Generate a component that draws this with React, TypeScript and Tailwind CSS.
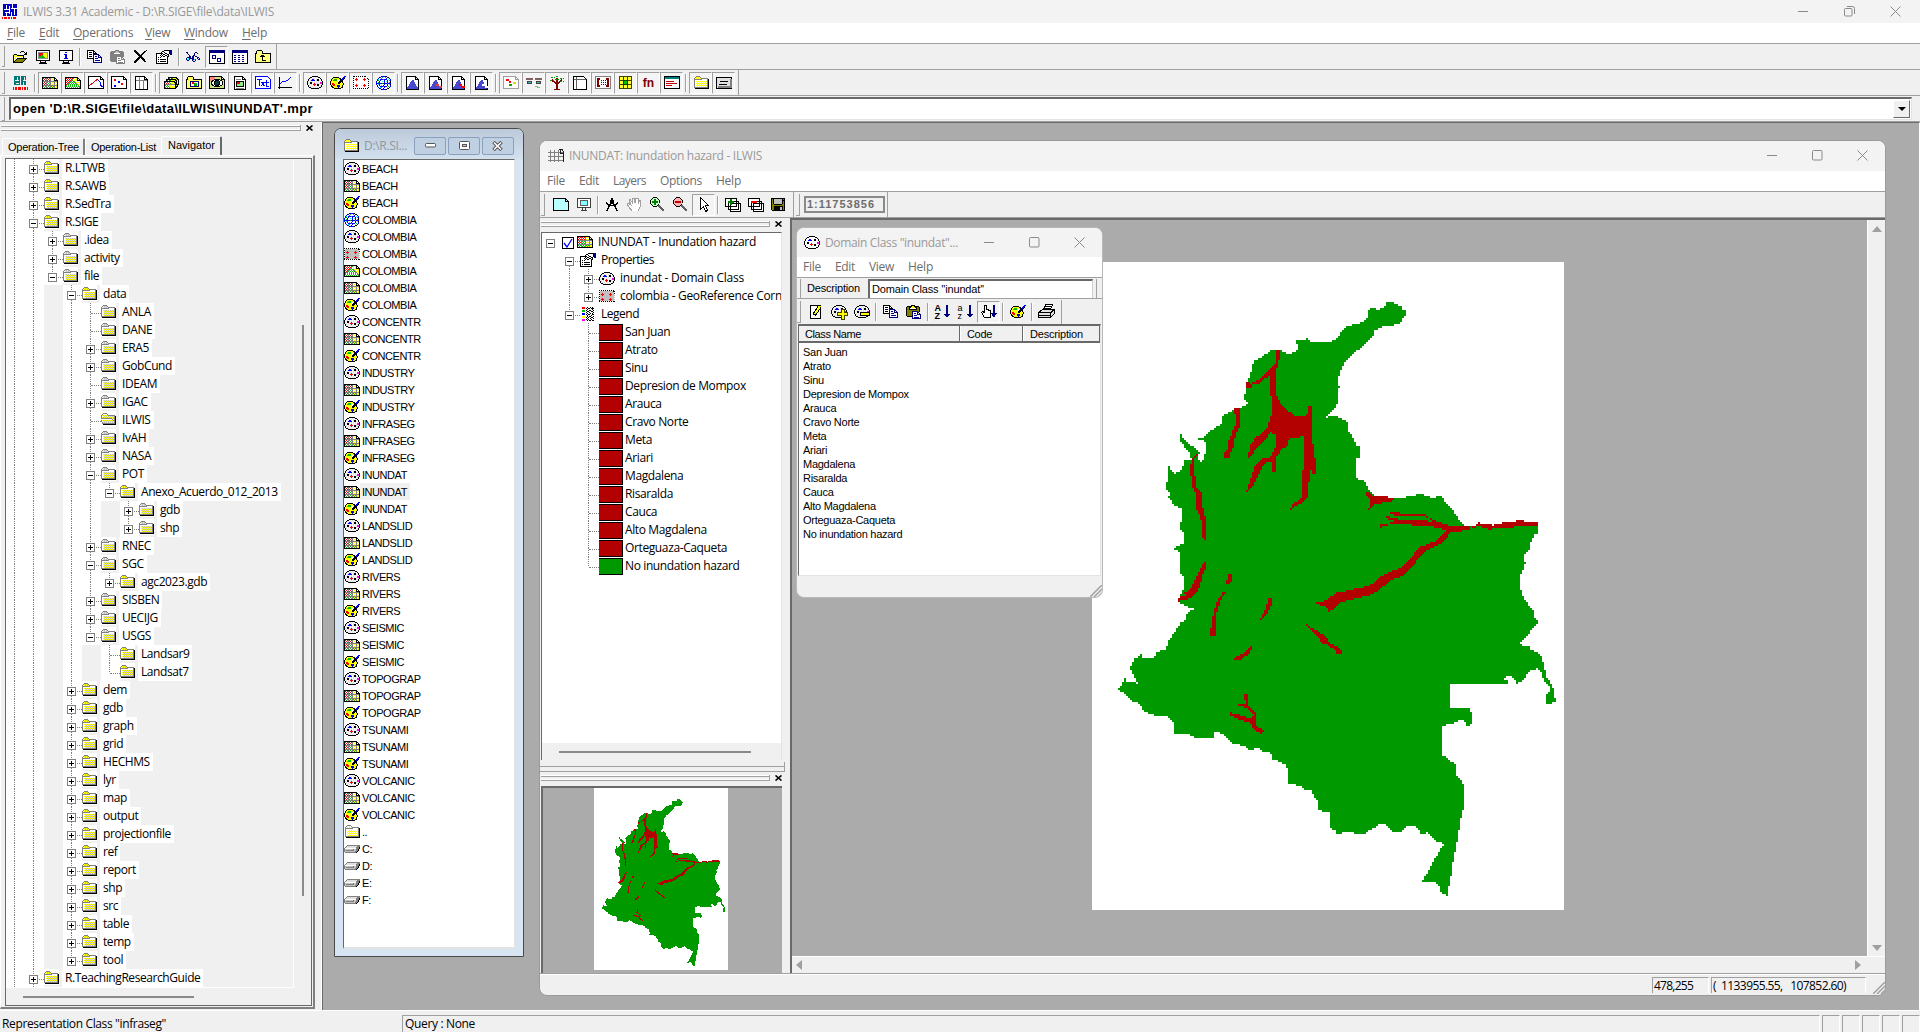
import { useLayoutEffect, useMemo, useRef, useState, type ReactNode } from "react";

const SEGOE = "font-['Open_Sans','Noto_Sans',sans-serif]";
const MSS = "font-['Liberation_Sans',sans-serif]";

/* Text that spreads or tightens its letters to fill a given width. */
function Fit({ w, children, className = "" }: { w: number; children: string; className?: string }) {
  const ref = useRef<HTMLSpanElement>(null);
  const [ls, setLs] = useState(0);
  useLayoutEffect(() => {
    if (ref.current) setLs((w - ref.current.getBoundingClientRect().width) / children.length);
  }, [w, children]);
  return (
    <span ref={ref} className={"inline-block whitespace-pre " + className} style={{ letterSpacing: ls }}>
      {children}
    </span>
  );
}

const PAL: Record<string, string> = {
  k: "#000000", w: "#ffffff", r: "#ff0000", g: "#00c000", G: "#808080", y: "#ffff00", b: "#0000ff",
  m: "#ff00ff", s: "#c0c0c0", n: "#000080", c: "#00ffff", t: "#008080", d: "#800000", o: "#808000", l: "#e0e0e0",
};

function Px({ rows, w = 16 }: { rows: string[]; w?: number }) {
  const out: ReactNode[] = [];
  rows.forEach((row, y) => {
    let x = 0;
    while (x < row.length) {
      const ch = row[x];
      let e = x + 1;
      while (e < row.length && row[e] === ch) e++;
      if (PAL[ch]) out.push(<rect key={x + "-" + y} x={x} y={y} width={e - x} height={1} fill={PAL[ch]} />);
      x = e;
    }
  });
  return (
    <svg className="block shrink-0" width={w} height={rows.length} viewBox={`0 0 ${w} ${rows.length}`} shapeRendering="crispEdges">
      {out}
    </svg>
  );
}

const RASTER = [
  "kkkkkkkkkkkkk",
  "krwrGrwrGywykk",
  "kwrwGwrwGwywkwk",
  "krwrGrwrGywykkkk",
  "kGGGGGGGGGGGGGGk",
  "kwrwGgwgGwywGwyk",
  "krwrGwgwGywyGywk",
  "kwrwGgwgGwywGwyk",
  "kGGGGGGGGGGGGGGk",
  "kgwgGwgwGgygGyyk",
  "kwgwGgwgGygyGyyk",
  "kkkkkkkkkkkkkkkk",
];
const DOMAIN = [
  "     kkkkkk",
  "   kkwlwlwlkk",
  "  klwlwlwlwlwk",
  " klwlbblwlkkwlk",
  " kwlbbbbwlkklwk",
  "klwlwlwlwlwlwlwk",
  "kwlkklwlwlwlwmmk",
  "klwkkwlrlwlwlmmk",
  "kwlwlwrrrwkklwlk",
  " klwlwlrlwkkwlk",
  " kwlwlwlwlwlwlk",
  "  kklwlwlwlwkk",
  "    kkkkkkkk",
];
const REPR = [
  "              bb",
  "   kkkkkk    bb",
  "  kyyyyyykk bbk",
  " kyygggyyykkbk",
  " kyggggywykkk",
  "kyyyyyyywkkkk",
  "kyyyyyywkkkyk",
  "kyrryyyykkyyyk",
  "kyrrryyyyyyyyk",
  " kyrryybbbyyk",
  " kkyyyybbbyyk",
  "  kkyyyybyykk",
  "    kkkkkkk",
];
const GLOBE = [
  "     kbbbbk",
  "   kbwgwwgwbk",
  "  bwwgwwwwbwwb",
  " bcwbbbgbbbwcwb",
  " bgwbwwwbwwbwgb",
  "bwwbwwcwbwcbwwk",
  "bwgbwwwwbwwbwgk",
  "bbbbbbgbbbbgbbb",
  "bwcbwwwwbwwbwck",
  " bwbwcwbwwwbwwb",
  " bwwbbbgbbbwgwb",
  "  bwcgwwbwwcwb",
  "   kbwwbwwwbk",
  "     kbbbbk",
];
const GEOREF = [
  "k k k k k k k k",
  " ssssssssssssskk",
  "kssssssssssssss",
  " ssrsssssssrssskk",
  "ksrrrsssssrrrss",
  " ssrsssssssrssssk",
  "kssssssssssssss",
  " sssssssssssssssk",
  "kssrsssssssrsss",
  " srrrsssssrrrsssk",
  "kssrsssssssrsss",
  "k k k k k k k kk",
];
const FOLDER = [
  "   GGGG",
  "  GywywG",
  " GwywywyGGGGGGG",
  " GGGGGGGGwwwwwGk",
  " GwwwwwwwwwwwwGk",
  " GwywywywywywyGk",
  " GwwywywywywywGk",
  " GwywywywywywyGk",
  " GwwywywywywywGk",
  " GwywywywywywyGk",
  " GwwywywywywywGk",
  " GGGGGGGGGGGGGGk",
  "  kkkkkkkkkkkkkk",
];
const FOLDER_OPEN = [
  "   GGGG",
  "  GwwwwG",
  " GywywywGGGGGGG",
  " GwywywywywywyGk",
  " GywywywywywywGk",
  "GGGGGGGGGGGGywGk",
  "GwwwwwwwwwwwGyGk",
  " GywywywywywyGGkk",
  " GwywywywywywyGkk",
  "  GywywywywywyGkk",
  "  GGGGGGGGGGGGGkk",
  "   kkkkkkkkkkkkk",
];
const deep = (rows: string[]) => rows.map((r) => r.replace(/yw/g, "ys"));
const TREE_FOLDER = deep(FOLDER);
const TREE_OPEN = deep(FOLDER_OPEN);
const MAPPOLY = [
  "kkkkkkkkkkkkk",
  "krwrwrwrgwwykk",
  "kwrwrwrGwywykwk",
  "krwrwrGgwywykkkk",
  "kwrwrGgwgGywywyk",
  "krwrGgwgwgGywyyk",
  "kwrGgwgwgwgGywyk",
  "krGgwgwgwgwgGyyk",
  "kGwgwgwgwgwgwGyk",
  "kgwgwgwgwgwgwgGk",
  "kwgwgwgwgwgwgwgk",
  "kkkkkkkkkkkkkkkk",
];
const DRIVE = [
  "   GGGGGGGGGGGGG",
  "  GllllllllllGGG",
  " GllllllllllGGGk",
  "GwwwwwwwwwwwGGGk",
  "GssssssssgssGGk",
  "GsGGGGGGGGssGGk",
  "GssssssssssGGk",
  " GGGGGGGGGGGk",
];
const COPY = [
  "kkkkkkk",
  "kwwwwwkk",
  "kwkkkwkwk",
  "kwwwwwkkkk",
  "kwkkkwnnnnnn",
  "kwwwwwnwwwwnn",
  "kwkkkwnwnnwnwn",
  "kwwwwwnwwwwnnnn",
  "kkkkkknwnnnwwwn",
  "      nwwwwwwwn",
  "      nwnnnnnwn",
  "      nwwwwwwwn",
  "      nnnnnnnnn",
];
const PASTE = [
  "     kkkk",
  " kkkkkyykkkkk",
  "kookkyyyykkook",
  "kookwwwwwwkook",
  "kookkkkkkkkook",
  "kooooooooooook",
  "kooooonnnnnnok",
  "kooooonwwwwnn",
  "kooooonwnnwnwn",
  "kooooonwwwwnnnn",
  "kooooonwnnnwwwn",
  " kkkkknwwwwwwwn",
  "      nwnnnnnwn",
  "      nnnnnnnnn",
];
const PASTE_GRAY = PASTE.map((r) => r.replace(/[konywG]/g, (c) => (c === "w" ? "w" : c === "y" ? "s" : "G")));
const PROPS = [
  "        kkkkkknn",
  "      kkwwwwwknn",
  "     kwwkwwwwknn",
  "kkkkkkkwwkkwwknn",
  "kwwwwkwkkwwkk nn",
  "kwwwkwkwwkkwk",
  "kwwwwkwkkwwkk",
  "kwkwkwwwwwwk",
  "kwwwwwwwwwwk",
  "kwkwkkkkkkwk",
  "kwwwwwwwwwwk",
  "kwkwkkkkkkwk",
  "kwwwwwwwwwwk",
  "kkkkkkkkkkkk",
];
const LEGEND = [
  "rrr  k  k k",
  "rrr k kk kkk",
  "     k    k",
  "ggg k  kk  k",
  "ggg  kk  kk",
  "    k  k   k",
  "bbb  k  k k",
  "bbb k kk  kk",
  "     k   k",
  "yyy  k kk  k",
  "yyy k k  kk",
  "     k  k  k",
  "mmm k k  k",
  "mmm  k kk kk",
];
const OPEN = [
  "         kkk",
  "        k   k k",
  "             kk",
  "  kkk       kkk",
  " kyyykkkkkkk",
  " kywywywywyk",
  " kwywywywywk",
  " kyywkkkkkkkkkk",
  " kwykooooooook",
  " kykooooooook",
  " kkooooooook",
  " kkkkkkkkkk",
];
const CROSS = [
  "kk          k",
  "kkk       kk",
  " kkk     kk",
  "  kkk   kk",
  "   kkk kk",
  "    kkkk",
  "     kkk",
  "    kkkkk",
  "   kkk kkk",
  "  kkk   kkk",
  " kkk     kk",
  "kkk       kk",
  "kk",
];
const GLASSES = [
  "nn       nn",
  " n      n  n",
  "  n     n",
  "   n   nn",
  "   nn nn nn",
  " nnnn nn   nn",
  "nwcnnnnn   n n",
  "nccn  nncn  nn",
  " nn   ncwn",
  "       nn",
];
const SAVE = [
  "kkkkkkkkkkkkkk",
  "koksssssssskok",
  "koksssssssskkk",
  "koksssssssskok",
  "koksssssssskok",
  "koksssssssskok",
  "kookkkkkkkkook",
  "kooooooooooook",
  "kookkkkkkkkkok",
  "kookkkkkksskok",
  "kookkkkkksskok",
  "kookkkkkksskok",
  " kkkkkkkkkkkkk",
];
const STACK = [
  "     kkkkkkkkk",
  "     krwrgyyykk",
  "   kkkkkkkkkkykk",
  "   krwrgwyyykkyk",
  " kkkkkkkkkkkykyk",
  " krwrwgwyyykkkyk",
  " kwrwrwgwywykkyk",
  " kGGGGGGGGGGkkkk",
  " kgwgwyyywywkyk",
  " kwgwgwywywykkk",
  " kgwgwgyyyyykk",
  " kkkkkkkkkkkk",
];

function Svg({ children, w = 16, h = 14 }: { children: ReactNode; w?: number; h?: number }) {
  return (
    <svg className="block shrink-0" width={w} height={h} viewBox={`0 0 ${w} ${h}`} shapeRendering="crispEdges" fill="none" stroke="#000">
      {children}
    </svg>
  );
}
const PAGE = "M.5 .5h12l3 3v9h-15z M12.5 .5v3h3";
const TALL = "M2.5 .5h8l3 3v10h-11z M10.5 .5v3h3";

const Ico = {
  monitor: (
    <Svg><path d="M1.500 .5h13v10h-13z" fill="#fff" /><path d="M5.500 10.500v2h5v-2 M4 13.500h8" /><path stroke="#909090" d="M3.500 2.500h9v6h-9z" /><path stroke="none" fill="#f00" d="M4 3h4v3h-4z" /><path stroke="none" fill="#ff0" d="M8 3h4v5h-4z" /><path stroke="none" fill="#00c000" d="M4 6l4-1 2 3h-6z" /></Svg>
  ),
  info: (
    <Svg><path d="M1.500 .5h13v10h-13z" fill="#fff" /><path d="M5.500 10.500v2h5v-2 M4 13.500h8" /><path stroke="none" fill="#0000e0" d="M7 2h2v1h-2z M6 4h3v4h1v1h-4v-1h1v-3h-1z" /></Svg>
  ),
  icons: (
    <Svg><path d="M.5 .5h15v13h-15z" fill="#fff" /><path stroke="none" fill="#000080" d="M0 0h16v3h-16z" /><path stroke="#000080" d="M3.500 5.500h3v3h-3z M8.500 8.500h3v3h-3z" /></Svg>
  ),
  details: (
    <Svg><path d="M.5 .5h15v13h-15z" fill="#fff" /><path stroke="none" fill="#000080" d="M0 0h16v3h-16z" /><path stroke="#000080" strokeDasharray="2 2" d="M2 5.500h12 M2 7.500h12 M2 9.500h12 M2 11.500h12" /></Svg>
  ),
  up: (
    <Svg><path d="M.5 12.500v-9h1v-2l1-1h4l1 1v2h8v9z" fill="#ffff80" /><path d="M7 10.500h4 M7.500 10.500v-5 M5 6.500h5 M6 5.500h3" /></Svg>
  ),
  seg: (<Svg h={13}><path d={PAGE} fill="#fff" /><path stroke="#f00" d="M1 10l5-4 4-3" /><path stroke="#00f" d="M9 3l3 3v3l3 2" /></Svg>),
  pts: (<Svg h={13}><path d={PAGE} fill="#fff" /><path stroke="none" fill="#f00" d="M3 3h2v2h-2z M10 7h2v2h-2z" /><path stroke="none" fill="#00f" d="M7 5h2v2h-2z M3 9h2v2h-2z" /></Svg>),
  table: (<Svg w={14}><path d="M.5 .5h9l3 3v10h-12z M9.500 .5v3h3" fill="#fff" /><path stroke="#808080" d="M1 4.500h11 M4.500 1v12 M8.500 4v9" /></Svg>),
  obj: (
    <Svg><path d="M.5 12.500v-9h1v-2l1-1h4l1 1v2h8v9z" fill="#ffff60" /><path d="M4.500 5.500h8v5h-8z" fill="#fff" stroke="#000080" strokeWidth="1.500" /><path stroke="none" fill="#f00" d="M6 6h2v2h-2z" /><path stroke="none" fill="#0a0" d="M8 7h3v3h-3z" /></Svg>
  ),
  view: (<Svg h={13}><path d={PAGE} fill="#cfe880" /><path stroke="none" fill="#f88" d="M1 1h5v4h-5z" /><ellipse cx="8" cy="7" rx="5.500" ry="3.500" fill="#fff" /><circle cx="8" cy="7" r="2.500" fill="#004040" /></Svg>),
  layout: (<Svg><path d={TALL} fill="#fff" /><path stroke="#808080" d="M4 3.500h5 M4 12h8" /><path d="M4.500 5.500h7v5h-7z" fill="#8e8" /><path stroke="none" fill="#f00" d="M5 6h3v2h-3z" /></Svg>),
  txt: (<Svg h={13}><path d="M.5 .5h12l3 3v9h-15z" fill="#fff" stroke="#00f" /><path stroke="#00f" d="M2 3.500h5 M4.500 3v7 M6.500 6l3 4 M9.500 6l-3 4 M11.500 4v6h2 M10 6.500h4" /></Svg>),
  graph: (<Svg><path d="M1.500 1v12 M0 11.500h14" /><path stroke="#00f" d="M2 8l3-3h3l2-1 3-3" /></Svg>),
  grf: (<Svg h={13}><path d="M.5 .5h12l3 3v9h-15z" fill="#fff" strokeDasharray="1 1" /><path stroke="#f00" d="M2 3.500h3 M3.500 2v3 M10 3.500h3 M11.500 2v3 M2 9.500h3 M3.500 8v3 M10 9.500h3 M11.500 8v3" /></Svg>),
  hand: (
    <svg className="block shrink-0" width="16" height="15" viewBox="0 0 16 15" fill="#fff" stroke="#a0a0a0" shapeRendering="crispEdges"><path d="M5 14l-3-4-2-3 1-1 3 2-2-5 1-1 3 5-1-6h2l1 5 1-5h2v6l2-4h1l-1 7-2 4" /></svg>
  ),
  compass: (<Svg w={14}><path d="M7 0v4 M5.500 2v3h3v-3 M5.500 5.500l-4 8 M8.500 5.500l4 8 M1 4.500l3 3h6l3-3" strokeWidth="1.300" /></Svg>),
  zin: (<Svg h={15}><path d="M8 8l6 6" strokeWidth="2.500" stroke="#606060" /><circle cx="5" cy="5" r="4.300" fill="#c8ffc8" /><path stroke="#008000" strokeWidth="2" d="M5 2v6 M2 5h6" /></Svg>),
  zout: (<Svg h={15}><path d="M8 8l6 6" strokeWidth="2.500" stroke="#606060" /><circle cx="5" cy="5" r="4.300" fill="#ffb0b0" /><path stroke="#c00000" strokeWidth="2" d="M2 5h6" /></Svg>),
  arrow: (<Svg w={10} h={16}><path d="M1.500 .5v12l3-3 2 5 2-1-2-5h3z" fill="#fff" /></Svg>),
  addl: (<Svg h={15}><path d="M5.500 6.500h10v8h-10z M3.500 4.500h10v8h-10z M.5 1.500h11v8h-11z" fill="#fff" /><path stroke="#008000" strokeWidth="2" d="M6 2v6 M3 5h6" /></Svg>),
  dell: (<Svg h={15}><path d="M5.500 6.500h10v8h-10z M3.500 4.500h10v8h-10z M.5 1.500h11v8h-11z" fill="#fff" /><path stroke="#f00" strokeWidth="2" d="M3 5h6" /></Svg>),
  sheet: (<Svg h={13}><path d={PAGE} fill="#b8ffff" /></Svg>),
  cymon: (<Svg h={15}><path d="M1.500 1.500h13v9h-13z M5 13.500h6 M6.500 11v2 M9.500 11v2" fill="#fff" stroke="#404040" /><path d="M4.500 3.500h7v5h-7z" fill="#80ffff" stroke="#606060" /></Svg>),
  grid: (<Svg h={13}><path d="M0 3.500h16 M0 7.500h16 M0 11.500h15 M2.500 1v12 M6.500 1v12 M10.500 1v12" stroke="#808080" /><path d="M11 .5h3l1.500 2v10 M12.500 1v3h3" stroke="#202020" /></Svg>),
  edit: (<Svg h={15}><path d="M2.500 1.500h10v13h-10z" fill="#fff" /><path d="M12 2l-6 9" stroke="#000" strokeWidth="4" /><path d="M12 2l-5 8" stroke="#ff0" strokeWidth="2" /></Svg>),
  tree: (<Svg h={15}><path stroke="#800000" strokeWidth="2" d="M8 14v-7 M3 5l5 4 5-4 M8 8v-5" /><path stroke="#800000" d="M5 14.500h6" /><path stroke="#00a000" strokeDasharray="2 1" d="M2 2.500h4 M7 1.500h3 M11 3.500h4 M1 5.500h4 M11 6.500h4 M6 4.500h4" /></Svg>),
  eyes: (<Svg h={12}><path stroke="#806060" strokeWidth="2" d="M0 1.500h7 M9 1.500h7" /><path fill="#40c0c0" stroke="#404040" d="M1.500 4.500h4v2h-4z M10.500 4.500h4v2h-4z" /><path stroke="#80c080" d="M9 9l5 2" /></Svg>),
  mat: (<Svg h={13}><path d="M.5 .5h15v12h-15z" fill="#fff" stroke="#808080" /><path stroke="#800000" strokeWidth="1.500" d="M5 3h-2v7h2 M11 3h2v7h-2" /><path stroke="#800000" strokeDasharray="1 1" d="M6 4.500h5 M6 6.500h5 M6 8.500h5" /></Svg>),
  filt: (<Svg><path d="M1.500 .5h12v12h-12z" fill="#ffff30" stroke="#404000" /><path d="M5.500 1v12 M9.500 1v12 M2 4.500h12 M2 8.500h12" stroke="#404000" /><path d="M5.500 4.500h4v4h-4z" fill="#00c000" stroke="#004000" /></Svg>),
  script: (<Svg h={13}><path d="M.5 .5h15v12h-15z" fill="#fff" /><path stroke="none" fill="#008080" d="M1 1h14v2h-14z" /><path stroke="#c00000" d="M2 5.500h8 M2 7.500h11 M2 9.500h6" /></Svg>),
  form: (<Svg h={12}><path d="M.5 .5h15v11h-15z" fill="#e0e0e0" /><path strokeWidth="2" d="M2 10h13v-8" stroke="#808080" /><path d="M4 4.500h8 M3 7.500h8" /></Svg>),
  tblnew: (<Svg><path d="M1.500 .5h10l3 3v10h-13z" fill="#fff" /><path stroke="#606060" d="M2 3.500h12 M4.500 1v12" /></Svg>),
  sample: (<Svg h={13}><path d={PAGE} fill="#fff" stroke="#a0a0a0" /><path stroke="#f00" strokeWidth="2" d="M3 4h3 M6 6h2" /><path stroke="#0a0" strokeWidth="2" d="M6 9h3" /><path stroke="#dd0" strokeWidth="2" d="M10 7h3" /></Svg>),
  az: (
    <span className={"relative flex h-4 w-4 flex-col text-[9px] font-bold leading-[8px] text-black " + MSS}>
      <span>A</span><span>Z</span>
      <svg className="absolute left-[9px] top-[1px]" width="6" height="14" viewBox="0 0 6 14" shapeRendering="crispEdges"><path d="M2 0h2v9h2l-3 4-3-4h2z" fill="#000080" /></svg>
    </span>
  ),
  za: (
    <span className={"relative flex h-4 w-4 flex-col text-[9px] leading-[8px] text-black " + MSS}>
      <span>a</span><span>z</span>
      <svg className="absolute left-[9px] top-[1px]" width="6" height="14" viewBox="0 0 6 14" shapeRendering="crispEdges"><path d="M2 0h2v9h2l-3 4-3-4h2z" fill="#000080" /></svg>
    </span>
  ),
  point: (
    <svg className="block shrink-0" width="16" height="15" viewBox="0 0 16 15" shapeRendering="crispEdges"><path d="M3.500 13.500l-3-5 1-1 2 1v-7h2v4l4 1v7z" fill="#fff" stroke="#000" /><path d="M12 1h2v8h2l-3 5-3-5h2z" fill="#000080" /></svg>
  ),
  print: (<Svg w={17} h={15}><path d="M5.500 5.500l2-5h7l-2 5z" fill="#fff" /><path d="M7 2.500h6 M6 4h6" /><path d="M.5 8.500l4-3h12v4l-4 4h-12z" fill="#e0e0e0" /><path d="M1 8.500h12l3-3 M1 11.500h11 M12.500 9v4" /></Svg>),
};

function Hist({ extra }: { extra?: string }) {
  return (
    <Svg w={14}>
      <path d="M.5 .5h9l3 3v10h-12z M9.500 .5v3h3" fill="#fff" />
      <path stroke="none" fill="#4848d0" d="M1 13v-2l2-2 2-4 1-1h1l1 1 2 4 2 3v1z" />
      {extra && <path stroke="none" fill={extra} d="M7 8h3v2h-3z M10 10h3v2h-3z" />}
    </Svg>
  );
}

function Logo() {
  return (
    <svg className="block shrink-0" width="15" height="16" viewBox="0 0 15 16" shapeRendering="crispEdges">
      <rect x="1" width="14" height="12" fill="#0000c0" />
      <path d="M4 1v4 M2 5.500h5 M7 2v8 M10.500 0v4 M9 4.500h6 M12.500 5v6 M3 8.500h4 M9 8v4 M4.500 9v3" stroke="#fff" fill="none" />
      <path d="M0 14h15" stroke="#f00" strokeWidth="2" strokeDasharray="1 1 3 1 2 1" />
    </svg>
  );
}
function LogoTeal() {
  return (
    <svg className="block shrink-0" width="15" height="16" viewBox="0 0 15 16" shapeRendering="crispEdges">
      <path d="M1 1h12v9h-12z" fill="#007878" />
      <path d="M4.500 2v3 M2 5.500h4 M7.500 1v9 M10 5.500h4 M10.500 7v3 M11 2v3 M3 8h3" stroke="#f0f0f0" fill="none" />
      <path d="M0 13.500h15" stroke="#f00" strokeWidth="3" strokeDasharray="1 1 2 1 3 1" />
    </svg>
  );
}

const Slot = ({ children, boxed, w = "w-[23px]" }: { children?: ReactNode; boxed?: boolean; w?: string }) => (
  <div className={"flex h-[22px] shrink-0 items-center justify-center " + w + (boxed ? " border-l border-t border-l-[#a0a0a0] border-t-[#a0a0a0] border-r border-b border-r-white border-b-white bg-[#f4f4f4]" : "")}>
    {children}
  </div>
);
const Sep = ({ w = "w-[6px]" }: { w?: string }) => (
  <div className={"flex h-[18px] shrink-0 justify-center " + w}>
    <div className="w-px bg-[#a0a0a0]" />
    <div className="w-px bg-white" />
  </div>
);

/* ---------- trees ---------- */
const Dots = ({ className }: { className: string }) => <div className={"absolute border-dotted border-[#808080] " + className} />;

function Cell({ up, down, dash, box, white = true }: { up?: boolean; down?: boolean; dash?: boolean; box?: string; white?: boolean }) {
  return (
    <div className={"relative h-[18px] w-[19px] shrink-0 " + (white ? "bg-white" : "")}>
      {up && <Dots className="left-[8px] top-0 h-[9px] border-l" />}
      {down && <Dots className="left-[8px] top-[9px] h-[9px] border-l" />}
      {dash && <Dots className="left-[9px] top-[10px] w-[10px] border-t" />}
      {box && (
        <div className="absolute left-[4px] top-[6px] h-[9px] w-[9px] border border-[#808080] bg-white">
          <div className="absolute left-px top-[3px] h-px w-[5px] bg-black" />
          {box === "+" && <div className="absolute left-[3px] top-px h-[5px] w-px bg-black" />}
        </div>
      )}
    </div>
  );
}

type Node = [number, string, string, string?];
const TREE: Node[] = [
  [1, "R.LTWB", "+"], [1, "R.SAWB", "+"], [1, "R.SedTra", "+"], [1, "R.SIGE", "-"],
  [2, ".idea", "+"], [2, "activity", "+"], [2, "file", "-"],
  [3, "data", "-"],
  [4, "ANLA", ""], [4, "DANE", ""], [4, "ERA5", "+"], [4, "GobCund", "+"], [4, "IDEAM", ""], [4, "IGAC", "+"],
  [4, "ILWIS", "", "open"], [4, "IvAH", "+"], [4, "NASA", "+"], [4, "POT", "-"],
  [5, "Anexo_Acuerdo_012_2013", "-"], [6, "gdb", "+"], [6, "shp", "+"],
  [4, "RNEC", "+"], [4, "SGC", "-"], [5, "agc2023.gdb", "+"], [4, "SISBEN", "+"], [4, "UECIJG", "+"], [4, "USGS", "-"],
  [5, "Landsar9", ""], [5, "Landsat7", ""],
  [3, "dem", "+"], [3, "gdb", "+"], [3, "graph", "+"], [3, "grid", "+"], [3, "HECHMS", "+"], [3, "lyr", "+"], [3, "map", "+"],
  [3, "output", "+"], [3, "projectionfile", "+"], [3, "ref", "+"], [3, "report", "+"], [3, "shp", "+"], [3, "src", "+"],
  [3, "table", "+"], [3, "temp", "+"], [3, "tool", "+"],
  [1, "R.TeachingResearchGuide", "+"],
];
function continues(i: number, col: number) {
  if (col <= 1) return true;
  for (let k = i + 1; k < TREE.length; k++) {
    if (TREE[k][0] === col) return true;
    if (TREE[k][0] < col) return false;
  }
  return false;
}

function NavTree() {
  return (
    <div className="flex h-[829px] w-[288px] shrink-0 flex-col overflow-hidden border-b border-r border-white">
      {TREE.map(([lvl, label, box, open], i) => (
        <div key={i} className="flex h-[18px] shrink-0">
          {Array.from({ length: lvl }, (_, c) => {
            const on = continues(i, c);
            return <Cell key={c} up={on} down={on} white={on} />;
          })}
          <Cell up down={continues(i, lvl)} dash box={box} />
          <div className="-ml-px flex h-4 w-4 shrink-0 items-start bg-white pt-0.5">
            <Px rows={open ? TREE_OPEN : TREE_FOLDER} />
          </div>
          <div className="w-[3px]" />
          <div className={"h-[18px] bg-white pl-[3px] pr-[3px] text-[12px] leading-[18px] tracking-[-0.42px] text-black " + SEGOE}>{label}</div>
        </div>
      ))}
    </div>
  );
}

const NAMES = ["BEACH", "COLOMBIA", "CONCENTR", "INDUSTRY", "INFRASEG", "INUNDAT", "LANDSLID", "RIVERS", "SEISMIC", "TOPOGRAP", "TSUNAMI", "VOLCANIC"];
const FILES: [string[], string][] = [];
NAMES.forEach((n) => {
  if (n === "COLOMBIA") [GLOBE, DOMAIN, GEOREF, MAPPOLY, RASTER, REPR].forEach((ic) => FILES.push([ic, n]));
  else [DOMAIN, RASTER, REPR].forEach((ic) => FILES.push([ic, n]));
});
FILES.push([FOLDER, ".."]);
["C:", "D:", "E:", "F:"].forEach((d) => FILES.push([DRIVE, d]));

const CLASSES = ["San Juan", "Atrato", "Sinu", "Depresion de Mompox", "Arauca", "Cravo Norte", "Meta", "Ariari", "Magdalena", "Risaralda", "Cauca", "Alto Magdalena", "Orteguaza-Caqueta", "No inundation hazard"];

/* ---------- map of Colombia ---------- */
const LAND =
  "885,127 912,127 914,133 932,138 937,148 946,152 950,160 943,172 935,180 928,193 890,198 868,202 855,212 848,228 828,246 806,268 790,283 768,303 757,318 749,340 743,358 748,382 742,402 742,428 735,442 718,458 708,472 740,466 752,475 768,480 774,490 774,512 788,530 798,555 812,558 812,588 800,596 800,650 806,660 824,664 832,680 840,696 852,708 885,710 912,716 945,711 972,710 978,701 998,701 1000,708 1025,712 1052,710 1064,722 1084,745 1105,775 1121,796 1150,798 1165,790 1210,800 1250,790 1290,783 1344,790 1346,818 1332,826 1322,850 1320,870 1300,886 1307,910 1296,935 1290,950 1290,970 1296,1005 1308,1022 1320,1040 1330,1050 1333,1075 1346,1088 1330,1105 1290,1150 1296,1157 1320,1160 1322,1172 1340,1174 1358,1195 1360,1220 1366,1235 1370,1252 1378,1258 1383,1275 1390,1285 1390,1308 1397,1315 1397,1328 1370,1330 1370,1300 1378,1296 1380,1278 1366,1270 1358,1255 1352,1235 1346,1226 1325,1228 1312,1240 1300,1260 1284,1268 1275,1270 1275,1258 1262,1244 1252,1246 1244,1258 1254,1264 1254,1275 1130,1275 1125,1272 1092,1273 1077,1276 1077,1342 1134,1342 1146,1360 1148,1378 1140,1396 1130,1395 1120,1382 1106,1382 1086,1392 1053,1398 1053,1480 1070,1495 1082,1503 1097,1512 1099,1545 1112,1560 1121,1577 1121,1645 1114,1670 1106,1715 1098,1760 1090,1800 1084,1840 1078,1870 1074,1900 1067,1906 1050,1895 1046,1875 1035,1865 994,1868 1012,1840 1030,1805 1050,1770 1062,1750 1040,1745 1022,1728 1010,1718 994,1722 984,1704 970,1695 950,1698 934,1715 905,1715 895,1702 885,1695 868,1692 858,1704 832,1712 822,1722 804,1725 780,1715 740,1722 735,1710 718,1704 720,1658 705,1654 684,1652 684,1625 670,1608 664,1590 640,1588 636,1578 594,1570 596,1545 588,1514 570,1505 548,1497 542,1480 520,1474 505,1464 480,1469 460,1458 424,1448 405,1428 386,1418 373,1417 368,1436 320,1436 300,1425 252,1424 252,1390 234,1370 200,1368 158,1352 150,1332 125,1322 110,1305 82,1287 98,1275 100,1257 112,1265 143,1270 132,1245 120,1225 135,1195 152,1184 158,1196 190,1196 200,1175 225,1168 238,1140 255,1115 270,1090 290,1080 290,1060 315,1043 285,1040 265,1022 280,990 282,950 270,940 270,875 247,865 265,857 282,852 280,820 266,798 278,780 278,745 255,738 236,712 243,700 224,684 234,655 234,618 255,640 275,630 284,602 304,602 300,580 268,540 270,522 290,545 315,565 328,578 322,602 338,604 345,580 345,545 320,535 345,530 360,515 395,490 400,465 430,450 450,445 474,432 460,410 470,395 470,365 480,345 490,305 510,295 545,270 570,268 580,277 605,282 622,268 620,240 655,236 662,245 720,246 740,235 768,200 800,192 830,180 838,146 860,146 864,152 875,143 885,138";
const FLOOD = [
  "555,268 567,268 567,300 560,330 556,365 560,385 558,405 572,430 598,455 620,470 642,470 654,462 655,438 668,438 669,550 676,600 681,640 674,645 664,636 660,605 658,655 652,710 635,730 602,748 604,738 636,710 638,640 642,600 642,530 610,533 594,540 592,558 572,570 556,600 556,638 546,638 546,603 522,612 508,640 492,675 468,697 482,660 496,615 515,597 542,590 556,565 560,528 540,514 528,540 500,562 482,592 475,592 480,556 496,535 528,508 540,480 547,450 545,415 538,400 537,350 520,358 508,370 490,372 485,383 468,383 468,364 484,370 505,360 535,330 556,312",
  "430,445 440,442 452,445 452,492 438,520 430,560 418,592 400,592 402,580 412,570 416,545 428,515 440,490 436,465 430,458",
  "328,580 315,590 314,640 320,680 338,700 338,740 345,770 348,843 340,843 334,780 320,750 318,705 304,668 302,630 304,595",
  "344,905 351,905 350,925 340,940 328,985 310,1010 290,1018 265,1024 264,1012 290,1005 276,996 296,994 312,965 330,930",
  "418,942 426,942 425,966 418,972 408,970",
  "400,994 408,996 392,1020 380,1060 375,1128 360,1127 370,1060 384,1020",
  "538,1012 543,1012 543,1035 530,1062 515,1080 510,1078 526,1050",
  "483,1158 489,1160 478,1180 465,1190 453,1202 426,1196 445,1186 466,1178",
  "648,1092 655,1100 680,1112 698,1122 715,1140 722,1152 745,1160 756,1175 755,1184 742,1182 738,1172 712,1155 695,1150 684,1130 664,1112",
  "826,698 840,696 848,708 888,708 915,718 895,728 858,730 836,748 840,720",
  "1344,786 1344,800 1312,798 1280,800 1222,806 1195,808 1165,798 1140,808 1102,816 1080,815 1068,840 1045,855 1010,872 985,895 965,925 945,944 905,960 868,988 850,1002 780,1020 756,1025 735,1045 712,1056 714,1044 674,1030 705,1022 742,998 838,978 880,945 935,922 965,890 990,862 1040,842 1068,815 1050,802 1010,800 960,794 915,790 870,802 868,794 905,788 915,782 888,775 886,768 912,775 950,782 1010,782 1035,788 1020,778 1000,768 950,768 900,764 902,756 936,760 1002,762 1025,778 1060,790 1085,800 1120,798 1145,802 1165,788 1210,796 1250,786 1288,782",
  "462,1302 473,1302 474,1336 490,1352 498,1362 498,1395 520,1412 518,1425 490,1408 486,1390 450,1380 420,1366 422,1358 440,1362 486,1378 490,1364 468,1342 450,1340 444,1331 466,1330",
];

/* Turn a polygon into square raster cells, one run of cells per scan line. */
function rasterPath(points: string, cell: number) {
  const p = points.split(" ").map((s) => s.split(",").map(Number));
  let d = "";
  for (let y = 6; y < 1950; y += cell) {
    const yc = y + cell / 2;
    const xs: number[] = [];
    for (let i = 0; i < p.length; i++) {
      const [x1, y1] = p[i];
      const [x2, y2] = p[(i + 1) % p.length];
      if (y1 <= yc !== y2 <= yc) xs.push(x1 + ((yc - y1) * (x2 - x1)) / (y2 - y1));
    }
    xs.sort((a, b) => a - b);
    for (let i = 0; i + 1 < xs.length; i += 2) {
      const a = Math.round((xs[i] - 6) / cell);
      const b = Math.max(a + 1, Math.round((xs[i + 1] - 6) / cell));
      d += `M${6 + a * cell} ${y}h${(b - a) * cell}v${cell}h${-(b - a) * cell}z`;
    }
  }
  return d;
}
function Colombia({ className, cell }: { className: string; cell: number }) {
  const land = useMemo(() => rasterPath(LAND, cell), [cell]);
  const flood = useMemo(() => FLOOD.map((f) => rasterPath(f, cell)).join(""), [cell]);
  return (
    <svg className={"block bg-white " + className} viewBox="6 6 1416 1944" preserveAspectRatio="none" shapeRendering="crispEdges">
      <path d={land} fill="#009900" />
      <path d={flood} fill="#b30000" />
    </svg>
  );
}

const ResizeGrip = () => (
  <svg className="block" width="12" height="12" viewBox="0 0 12 12" stroke="#a0a0a0" strokeWidth="1.500"><path d="M0 12L12 0 M4 12L12 4 M8 12L12 8" /></svg>
);
const DockHead = () => (
  <div className="flex h-[14px] shrink-0 items-center pb-[2px]">
    <div className="ml-px flex h-[6px] flex-1 flex-col justify-between border-r border-[#a0a0a0]">
      <div className="h-[2px] border-b border-[#a0a0a0] bg-white" />
      <div className="h-[2px] border-b border-[#a0a0a0] bg-white" />
    </div>
    <svg className="ml-[5px] mr-[5px]" width="7" height="6" viewBox="0 0 7 6" stroke="#000" strokeWidth="1.600"><path d="M.5 .5l6 5 M6.500 .5l-6 5" /></svg>
  </div>
);

const WinButtons = ({ gap }: { gap: string }) => (
  <div className={"flex items-center " + gap}>
    <svg width="11" height="11" viewBox="0 0 11 11" stroke="#8a8a8a" fill="none" shapeRendering="crispEdges"><path d="M0 5.500h10" /></svg>
    <svg width="11" height="11" viewBox="0 0 11 11" stroke="#8a8a8a" fill="none"><rect x=".5" y=".5" width="9.500" height="9.500" rx="1" /></svg>
    <svg width="11" height="11" viewBox="0 0 11 11" stroke="#8a8a8a" fill="none"><path d="M.5 .5l10 10 M10.500 .5l-10 10" /></svg>
  </div>
);

function Menu({ items, className }: { items: [string, number, number][]; className: string }) {
  return (
    <div className={"flex shrink-0 items-center bg-white text-[12px] leading-[18px] text-[#6d6d6d] " + SEGOE + " " + className}>
      {items.map(([t, w, slot], i) => (
        <div key={i} className="shrink-0" style={{ width: slot }}>
          <Fit w={w}>{t}</Fit>
        </div>
      ))}
    </div>
  );
}

function FileListWindow() {
  const btn = "flex h-[18px] w-[32px] items-center justify-center rounded-[2px] border border-[#8ba0bd] bg-[#bfd0e3]";
  return (
    <div className="absolute left-[11px] top-[5px] flex h-[829px] w-[190px] flex-col rounded-t-[7px] border border-[#4a4a4a] bg-[#d7e4f2]">
      <div className="flex h-[30px] shrink-0 items-center rounded-t-[6px] bg-gradient-to-b from-[#bccadb] to-[#d3e0ee] pl-[8px]">
        <div className="mt-[3px]"><Px rows={FOLDER} /></div>
        <span className={"ml-[5px] mt-[4px] w-[50px] text-[12px] text-[#8f979f] " + SEGOE}><Fit w={43}>D:\R.SI...</Fit></span>
        <div className="mt-[3px] flex gap-[2px]">
          <div className={btn}><svg width="11" height="5"><rect x=".5" y=".5" width="10" height="3.500" rx="1" fill="#fff" stroke="#555" /></svg></div>
          <div className={btn}><svg width="11" height="9"><rect x=".5" y=".5" width="10" height="8" rx="1" fill="#fff" stroke="#555" /><rect x="3.500" y="3.500" width="4" height="2" fill="#bfd0e3" stroke="#555" /></svg></div>
          <div className={btn}><svg width="12" height="10"><path d="M1.500 1l8 8 M9.500 1l-8 8" stroke="#555" strokeWidth="3.500" /><path d="M2 1.500l7 7 M9 1.500l-7 7" stroke="#fff" strokeWidth="1.500" /></svg></div>
        </div>
      </div>
      <div className="ml-[8px] mr-[8px] flex h-[790px] flex-col border-l border-t border-b-2 border-r border-l-[#696969] border-t-[#696969] border-b-[#e3e3e3] border-r-[#e3e3e3] bg-white">
        {FILES.map(([ic, name], i) => (
          <div key={i} className="flex h-[17px] shrink-0 items-center">
            <div className="flex h-[16px] w-[16px] items-center"><Px rows={ic} /></div>
            <div className={"h-[17px] pl-[2px] pr-[3px] text-[11px] leading-[18px] tracking-[-0.45px] text-black " + MSS + (i === 19 ? " bg-[#f0f0f0]" : "")}>{name}</div>
          </div>
        ))}
      </div>
    </div>
  );
}

function LegendTree() {
  const txt = "text-[12px] leading-[17px] text-black " + SEGOE;
  return (
    <div className="flex h-[510px] flex-col overflow-hidden bg-white">
      <div className="flex h-[18px] shrink-0">
        <Cell box="-" />
        <div className="-ml-[4px] w-[5px] font-['Liberation_Serif',serif] text-[12px] font-bold leading-[14px] text-[#0000ff]">i</div>
        <div className="mr-[3px] mt-[4px] flex h-[12px] w-[12px] items-center justify-center border border-black bg-white">
          <svg width="10" height="10" viewBox="0 0 10 10" fill="none" stroke="#0000ff" strokeWidth="1.300"><path d="M1 5l3 4 5-8" /></svg>
        </div>
        <div className="mt-[3px] w-[16px]"><Px rows={RASTER} /></div>
        <div className={"ml-[5px] whitespace-nowrap " + txt}><Fit w={158}>INUNDAT - Inundation hazard</Fit></div>
      </div>
      <div className="flex h-[18px] shrink-0">
        <Cell white={false} /><Cell down dash box="-" />
        <div className="mt-[2px] w-[21px]"><Px rows={PROPS} /></div>
        <div className={txt}><Fit w={53}>Properties</Fit></div>
      </div>
      <div className="flex h-[18px] shrink-0">
        <Cell white={false} /><Cell up down /><Cell up down dash box="+" />
        <div className="mt-[3px] w-[21px]"><Px rows={DOMAIN} /></div>
        <div className={txt}><Fit w={124}>inundat - Domain Class</Fit></div>
      </div>
      <div className="flex h-[18px] shrink-0">
        <Cell white={false} /><Cell up down /><Cell up dash box="+" />
        <div className="mt-[3px] w-[21px] shrink-0"><Px rows={GEOREF} /></div>
        <div className={"whitespace-nowrap " + txt}><Fit w={162}>colombia - GeoReference Corn</Fit></div>
      </div>
      <div className="flex h-[18px] shrink-0">
        <Cell white={false} /><Cell up dash box="-" />
        <div className="ml-[2px] mt-[2px] w-[19px]"><Px rows={LEGEND} /></div>
        <div className={txt}><Fit w={38}>Legend</Fit></div>
      </div>
      {CLASSES.map((c, i) => (
        <div key={c} className="flex h-[18px] shrink-0">
          <Cell /><Cell /><Cell up down={i < 13} dash />
          <div className={"-ml-px mt-px h-[17px] w-[25px] shrink-0 border border-black " + (i === 13 ? "bg-[#009900]" : "bg-[#b30000]")} />
          <div className={"ml-[2px] whitespace-nowrap tracking-[-0.38px] " + txt}>{c}</div>
        </div>
      ))}
    </div>
  );
}

function DomainWindow() {
  return (
    <div className="absolute left-[4px] top-[7px] flex h-[371px] w-[307px] flex-col overflow-hidden rounded-[8px] border border-[#b8b8b8] bg-[#f0f0f0]">
      <div className="flex h-[29px] shrink-0 items-center justify-between bg-[#f3f3f3] pl-[7px] pr-[17px]">
        <div className="flex items-center gap-[5px]">
          <Px rows={DOMAIN.map((r) => r.replace(/l/g, "w"))} />
          <span className={"text-[12px] text-[#999999] " + SEGOE}><Fit w={133}>{'Domain Class "inundat"...'}</Fit></span>
        </div>
        <WinButtons gap="gap-[34px]" />
      </div>
      <Menu className="h-[20px] pl-[6px]" items={[["File", 18, 32], ["Edit", 20, 34], ["View", 25, 39], ["Help", 25, 30]]} />
      <div className="flex h-[21px] shrink-0 items-center border-t border-[#a0a0a0]">
        <div className="ml-[2px] h-[19px] w-[2px] border-r border-[#a0a0a0]" />
        <span className={"ml-[6px] w-[61px] text-[11px] " + MSS}><Fit w={53}>Description</Fit></span>
        <div className={"flex h-[19px] w-[225px] items-center border-l-2 border-t-2 border-l-[#696969] border-t-[#696969] border-r border-r-[#d0d0d0] bg-white pl-[2px] text-[11px] " + MSS}>
          <Fit w={112}>{"Domain Class ''inundat''"}</Fit>
        </div>
        <div className="ml-[3px] h-[19px] w-px bg-[#a0a0a0]" />
      </div>
      <div className="flex h-[26px] shrink-0 items-center border-t border-[#a0a0a0]">
        <div className="h-[22px] w-[4px] border-b border-r border-[#a0a0a0]" />
        <div className="w-[3px]" />
        <Slot>{Ico.edit}</Slot>
        <Slot>
          <div className="relative">
            <Px rows={DOMAIN} />
            <svg className="absolute left-[6px] top-[4px]" width="11" height="11" viewBox="0 0 11 11" shapeRendering="crispEdges"><path d="M4.500 .5h3v3h3v3h-3v4h-3v-4h-4v-3h4z" fill="#ffff00" stroke="#404000" /></svg>
          </div>
        </Slot>
        <Slot><div className="relative"><Px rows={DOMAIN} /><div className="absolute left-[6px] top-[7px] h-[4px] w-[10px] border border-black bg-[#ffff00]" /></div></Slot>
        <Sep />
        <Slot><Px rows={COPY} /></Slot>
        <Slot><Px rows={PASTE} /></Slot>
        <Sep />
        <Slot>{Ico.az}</Slot>
        <Slot>{Ico.za}</Slot>
        <Slot boxed>{Ico.point}</Slot>
        <Sep />
        <Slot><Px rows={REPR} /></Slot>
        <Sep />
        <Slot>{Ico.print}</Slot>
        <div className="ml-[3px] h-[24px] w-px bg-[#a0a0a0]" />
      </div>
      <div className="mx-px flex h-[252px] shrink-0 flex-col border-l border-t-2 border-[#696969] border-b border-r border-b-[#e3e3e3] border-r-[#e3e3e3] bg-white">
        <div className={"flex h-[17px] shrink-0 border-b-2 border-[#696969] bg-[#f0f0f0] text-[11px] leading-[17px] " + MSS}>
          <div className="w-[161px] border-r border-[#696969] pl-[6px]"><Fit w={56}>Class Name</Fit></div>
          <div className="w-[63px] border-l border-r border-[#696969] border-l-white pl-[6px]"><Fit w={25}>Code</Fit></div>
          <div className="flex-1 border-l border-r border-[#696969] border-l-white pl-[6px]"><Fit w={53}>Description</Fit></div>
        </div>
        <div className={"flex flex-col pl-[4px] pt-[2px] text-[11px] leading-[14px] tracking-[-0.26px] text-black " + MSS}>
          {CLASSES.map((c) => <div key={c} className="h-[14px] whitespace-nowrap">{c}</div>)}
        </div>
      </div>
      <div className="flex flex-1 items-end justify-end"><ResizeGrip /></div>
    </div>
  );
}

function MapWindow() {
  const tri = "h-0 w-0 border-transparent";
  return (
    <div className="absolute left-[216px] top-[17px] flex h-[856px] w-[1347px] flex-col overflow-hidden rounded-[8px] border border-[#9a9a9a] bg-[#f0f0f0]">
      <div className="flex h-[30px] shrink-0 items-center justify-between bg-[#f3f3f3] pb-px pl-[8px] pr-[17px]">
        <div className="flex items-center gap-[5px]">
          {Ico.grid}
          <span className={"text-[12px] text-[#999999] " + SEGOE}><Fit w={193}>INUNDAT: Inundation hazard - ILWIS</Fit></span>
        </div>
        <WinButtons gap="gap-[34px]" />
      </div>
      <Menu className="h-[20px] pl-[7px]" items={[["File", 18, 32], ["Edit", 20, 34], ["Layers", 33, 47], ["Options", 42, 56], ["Help", 25, 30]]} />
      <div className="flex h-[27px] shrink-0 items-center border-b border-t border-[#a0a0a0] pl-px">
        <div className="h-[22px] w-[4px] border-b border-r border-[#a0a0a0]" />
        <div className="w-[4px]" />
        <Slot>{Ico.sheet}</Slot><Slot>{Ico.cymon}</Slot>
        <Sep w="w-[5px]" />
        <Slot>{Ico.compass}</Slot><Slot>{Ico.hand}</Slot><Slot>{Ico.zin}</Slot><Slot>{Ico.zout}</Slot><Slot boxed>{Ico.arrow}</Slot>
        <Sep />
        <Slot>{Ico.addl}</Slot><Slot>{Ico.dell}</Slot><Slot><Px rows={SAVE} /></Slot>
        <div className="ml-[3px] h-full w-px bg-[#a0a0a0]" />
        <div className="ml-[2px] h-[22px] w-[4px] border-b border-r border-[#a0a0a0]" />
        <div className={"ml-[4px] flex h-[17px] w-[81px] items-center border-2 border-[#8a8a8a] pl-[1px] text-[11px] font-bold text-[#6d6d6d] " + MSS}>
          <Fit w={68}>1:11753856</Fit>
        </div>
        <div className="ml-[2px] h-full w-px bg-[#a0a0a0]" />
      </div>
      <div className="flex h-[756px] shrink-0 border-b border-[#a0a0a0]">
        <div className="flex w-[250px] shrink-0 flex-col">
          <div className="w-[247px]"><DockHead /></div>
          <div className="ml-px mr-[8px] flex h-[528px] shrink-0 flex-col border-l border-t border-[#696969] border-r border-r-[#e3e3e3]">
            <LegendTree />
            <div className="ml-[17px] mt-[8px] h-[2px] w-[192px] bg-[#8a8a8a]" />
          </div>
          <div className="mt-[2px] h-[5px] w-[245px] shrink-0 border-b border-r border-[#a0a0a0]" />
          <div className="h-[5px] w-[245px] shrink-0 border-b border-r border-[#a0a0a0]" />
          <div className="w-[247px]"><DockHead /></div>
          <div className="ml-px mr-[8px] flex flex-1 border-l-2 border-t-2 border-[#696969] bg-[#ababab] pl-[51px]">
            <Colombia className="h-[182px] w-[134px]" cell={10.6} />
          </div>
        </div>
        <div className="flex flex-1 flex-col border-l-2 border-t-2 border-[#696969]">
          <div className="flex flex-1">
            <div className="relative flex-1 bg-[#ababab]">
              <div className="pl-[300px] pt-[42px]"><Colombia className="h-[648px] w-[472px]" cell={6} /></div>
              <DomainWindow />
            </div>
            <div className="flex w-[18px] flex-col items-center justify-between border-l border-white pb-[5px] pt-[6px]">
              <div className={tri + " border-x-[5px] border-b-[6px] border-b-[#a0a0a0]"} />
              <div className={tri + " border-x-[5px] border-t-[6px] border-t-[#a0a0a0]"} />
            </div>
          </div>
          <div className="flex h-[17px] items-center justify-between border-t border-white pl-[4px] pr-[24px]">
            <div className={tri + " border-y-[5px] border-r-[6px] border-r-[#a0a0a0]"} />
            <div className={tri + " border-y-[5px] border-l-[6px] border-l-[#a0a0a0]"} />
          </div>
        </div>
      </div>
      <div className={"flex flex-1 items-start justify-end border-t border-white pt-[2px] text-[12px] leading-[15px] text-black " + SEGOE}>
        <div className="mr-[2px] h-[16px] w-[57px] border-l border-t border-[#a0a0a0] border-r border-r-white pl-px"><Fit w={39}>478,255</Fit></div>
        <div className="mr-[7px] h-[16px] w-[155px] border-l border-t border-[#a0a0a0] border-r border-r-white pl-px"><Fit w={133}>{"(  1133955.55,   107852.60)"}</Fit></div>
        <div className="mt-[5px]"><ResizeGrip /></div>
      </div>
    </div>
  );
}

export default function App() {
  return (
    <div className="flex h-[1032px] w-[1920px] flex-col overflow-hidden bg-[#f0f0f0] text-black">
      <div className="flex h-[23px] shrink-0 items-center justify-between bg-[#f3f3f3] pl-[2px] pr-[19px]">
        <div className="flex items-center gap-[6px]">
          <Logo />
          <span className={"text-[12px] text-[#999999] " + SEGOE}><Fit w={251}>ILWIS 3.31 Academic - D:\R.SIGE\file\data\ILWIS</Fit></span>
        </div>
        <div className="flex items-center gap-[35px]">
          <svg width="11" height="11" viewBox="0 0 11 11" stroke="#8a8a8a"><path d="M0 5.500h10" shapeRendering="crispEdges" /></svg>
          <svg width="11" height="11" viewBox="0 0 11 11" fill="none" stroke="#8a8a8a"><rect x=".5" y="2.500" width="7.500" height="7.500" rx="1" /><path d="M3 .5h5.500q2 0 2 2v5.500" /></svg>
          <svg width="11" height="11" viewBox="0 0 11 11" stroke="#8a8a8a"><path d="M.5 .5l10 10 M10.500 .5l-10 10" /></svg>
        </div>
      </div>
      <div className={"flex h-[20px] shrink-0 items-center bg-white pl-[7px] text-[12px] text-[#6d6d6d] " + SEGOE}>
        {([["F", "ile", 32], ["E", "dit", 34], ["O", "perations", 72], ["V", "iew", 39], ["W", "indow", 58], ["H", "elp", 30]] as [string, string, number][]).map(([a, b, w]) => (
          <div key={a} className="whitespace-nowrap tracking-[-0.25px]" style={{ width: w }}>
            <span className="underline underline-offset-2">{a}</span>{b}
          </div>
        ))}
      </div>
      <div className="flex h-[27px] shrink-0 items-center border-b border-t border-[#a0a0a0]">
        <div className="ml-[2px]"><div className="h-[21px] w-[3px] border-b border-r border-[#a0a0a0]" /></div>
        <div className="w-[3px]" />
        <Slot><Px rows={OPEN} /></Slot><Slot>{Ico.monitor}</Slot><Slot>{Ico.info}</Slot>
        <Sep w="w-[6px]" />
        <Slot><Px rows={COPY} /></Slot><Slot><Px rows={PASTE_GRAY} /></Slot><Slot><Px rows={CROSS} w={13} /></Slot><Slot><Px rows={PROPS} /></Slot>
        <Sep w="w-[7px]" />
        <Slot><Px rows={GLASSES} /></Slot><Slot boxed>{Ico.icons}</Slot><Slot>{Ico.details}</Slot><Slot>{Ico.up}</Slot>
        <div className="ml-[2px] h-full w-px bg-[#a0a0a0]" />
      </div>
      <div className="flex h-[26px] shrink-0 items-center border-b border-[#a0a0a0]">
        <div className="ml-[2px] h-[22px] w-[3px] border-b border-r border-[#a0a0a0]" />
        <div className="w-[4px]" />
        <Slot><LogoTeal /></Slot>
        <Sep />
        {[<Px rows={RASTER} />, <Px rows={MAPPOLY} />, Ico.seg, Ico.pts, Ico.table].map((x, i) => <Slot key={i} boxed>{x}</Slot>)}
        <Sep />
        {[<Px rows={STACK} />, Ico.obj, Ico.view, Ico.layout, Ico.txt, Ico.graph].map((x, i) => <Slot key={i} boxed>{x}</Slot>)}
        <Sep />
        {[<Px rows={DOMAIN} />, <Px rows={REPR} />, Ico.grf, <Px rows={GLOBE} />].map((x, i) => <Slot key={i} boxed>{x}</Slot>)}
        <Sep />
        {[undefined, "#e04040", "#ff0000", "#ffffff"].map((x, i) => <Slot key={i} boxed><Hist extra={x} /></Slot>)}
        <Sep />
        {[Ico.sample, Ico.eyes, Ico.tree, Ico.tblnew, Ico.mat, Ico.filt, <span className={"text-[12px] font-bold text-[#800000] " + MSS}>fn</span>, Ico.script].map((x, i) => <Slot key={i} boxed>{x}</Slot>)}
        <Sep />
        {[<Px rows={FOLDER} />, Ico.form].map((x, i) => <Slot key={i} boxed>{x}</Slot>)}
        <div className="ml-[3px] h-full w-px bg-[#a0a0a0]" />
      </div>
      <div className="flex h-[26px] shrink-0 items-center border-b border-[#a0a0a0] pr-[8px]">
        <div className="ml-[2px] mr-[4px] h-[24px] w-[3px] border-b border-r border-[#a0a0a0]" />
        <div className="flex h-[23px] flex-1 items-center border-l-2 border-t-2 border-l-[#696969] border-t-[#696969] border-b border-r border-b-[#e3e3e3] border-r-[#e3e3e3] bg-white pl-[2px] pr-px">
          <span className={"flex-1 text-[13px] font-bold leading-[18px] " + MSS}><Fit w={300}>open 'D:\R.SIGE\file\data\ILWIS\INUNDAT'.mpr</Fit></span>
          <div className="flex h-[18px] w-[17px] items-center justify-center border border-b-[#696969] border-l-white border-r-[#696969] border-t-white bg-[#f0f0f0]">
            <div className="h-0 w-0 border-x-[4px] border-t-[4px] border-transparent border-t-black" />
          </div>
        </div>
      </div>

      <div className="flex h-[888px] shrink-0">
        <div className="flex w-[322px] shrink-0 flex-col border-r border-white">
          <div className="w-[318px]"><DockHead /></div>
          <div className={"flex h-[19px] shrink-0 items-end pl-[2px] text-[11px] leading-[16px] " + MSS}>
            <div className="h-[17px] w-[83px] rounded-t-[2px] border-l border-t border-white border-r-2 border-r-[#808080] pl-[5px]"><Fit w={71}>Operation-Tree</Fit></div>
            <div className="h-[17px] w-[76px] rounded-t-[2px] border-l border-t border-white pl-[5px]"><Fit w={65}>Operation-List</Fit></div>
            <div className="h-[19px] w-[61px] rounded-t-[2px] border-l border-t border-white border-r-2 border-r-[#696969] pl-[6px]"><Fit w={47}>Navigator</Fit></div>
          </div>
          <div className="flex h-[854px] w-[315px] shrink-0 border-b-2 border-l border-r-2 border-t border-b-[#808080] border-l-white border-r-[#808080] border-t-white pl-[4px] pt-[2px]">
            <div className="flex h-[848px] w-[307px] flex-col border border-[#696969]">
              <div className="flex">
                <NavTree />
                <div className="flex flex-1 justify-center pt-[166px]"><div className="h-[571px] w-[2px] bg-[#8a8a8a]" /></div>
              </div>
              <div className="ml-[17px] mt-[8px] h-[2px] w-[171px] bg-[#8a8a8a]" />
            </div>
          </div>
        </div>
        <div className="relative flex-1 overflow-hidden border-l border-t border-[#696969] bg-[#ababab] border-r border-r-white">
          <FileListWindow />
          <MapWindow />
        </div>
      </div>

      <div className={"flex flex-1 items-end border-t border-white text-[12px] leading-[15px] " + SEGOE}>
        <div className="h-[17px] w-[402px] pl-[2px] pt-px"><Fit w={164}>{'Representation Class "infraseg"'}</Fit></div>
        <div className="h-[17px] w-[1418px] border-l border-t border-[#a0a0a0] border-r border-r-white pl-[2px]"><Fit w={70}>Query : None</Fit></div>
        {[0, 1, 2, 3, 4].map((i) => (
          <div key={i} className="ml-[2px] h-[17px] w-[18px] border-l border-t border-[#a0a0a0] border-r border-r-white" />
        ))}
      </div>
    </div>
  );
}
